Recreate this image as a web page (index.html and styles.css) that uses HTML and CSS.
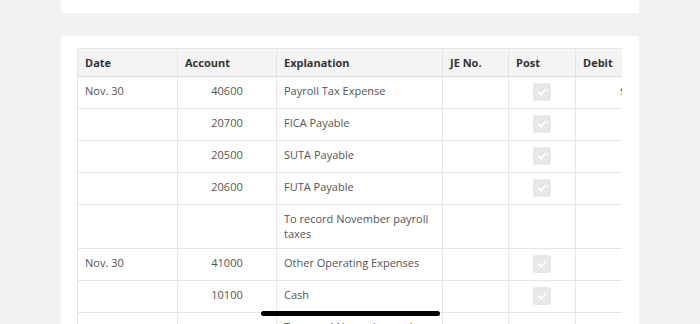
FILE: index.html
```html
<!DOCTYPE html>
<html>
<head>
<meta charset="utf-8">
<link rel="stylesheet" href="styles.css">
</head>
<body>
<div class="page">
  <div class="card card-top"></div>
  <div class="card card-main">
    <div class="table-wrap">
      <table class="journal">
        <colgroup>
          <col class="c-date"><col class="c-acct"><col class="c-expl"><col class="c-je"><col class="c-post"><col class="c-debit">
        </colgroup>
        <thead>
          <tr><th>Date</th><th>Account</th><th>Explanation</th><th>JE No.</th><th>Post</th><th>Debit</th></tr>
        </thead>
        <tbody>
          <tr><td>Nov. 30</td><td class="num">40600</td><td>Payroll Tax Expense</td><td></td><td class="post"><span class="chk"><svg viewBox="0 0 18 18" width="18" height="18"><path d="M5.5 9.2l2.4 2.4 4.6-4.8" fill="none" stroke="#fff" stroke-width="1.6" stroke-linecap="round" stroke-linejoin="round"/></svg></span></td><td><span class="dollar">$</span></td></tr>
          <tr><td></td><td class="num">20700</td><td>FICA Payable</td><td></td><td class="post"><span class="chk"><svg viewBox="0 0 18 18" width="18" height="18"><path d="M5.5 9.2l2.4 2.4 4.6-4.8" fill="none" stroke="#fff" stroke-width="1.6" stroke-linecap="round" stroke-linejoin="round"/></svg></span></td><td></td></tr>
          <tr><td></td><td class="num">20500</td><td>SUTA Payable</td><td></td><td class="post"><span class="chk"><svg viewBox="0 0 18 18" width="18" height="18"><path d="M5.5 9.2l2.4 2.4 4.6-4.8" fill="none" stroke="#fff" stroke-width="1.6" stroke-linecap="round" stroke-linejoin="round"/></svg></span></td><td></td></tr>
          <tr><td></td><td class="num">20600</td><td>FUTA Payable</td><td></td><td class="post"><span class="chk"><svg viewBox="0 0 18 18" width="18" height="18"><path d="M5.5 9.2l2.4 2.4 4.6-4.8" fill="none" stroke="#fff" stroke-width="1.6" stroke-linecap="round" stroke-linejoin="round"/></svg></span></td><td></td></tr>
          <tr><td></td><td class="num"></td><td>To record November payroll taxes</td><td></td><td></td><td></td></tr>
          <tr><td>Nov. 30</td><td class="num">41000</td><td>Other Operating Expenses</td><td></td><td class="post"><span class="chk"><svg viewBox="0 0 18 18" width="18" height="18"><path d="M5.5 9.2l2.4 2.4 4.6-4.8" fill="none" stroke="#fff" stroke-width="1.6" stroke-linecap="round" stroke-linejoin="round"/></svg></span></td><td></td></tr>
          <tr><td></td><td class="num">10100</td><td>Cash</td><td></td><td class="post"><span class="chk"><svg viewBox="0 0 18 18" width="18" height="18"><path d="M5.5 9.2l2.4 2.4 4.6-4.8" fill="none" stroke="#fff" stroke-width="1.6" stroke-linecap="round" stroke-linejoin="round"/></svg></span></td><td></td></tr>
          <tr><td></td><td class="num"></td><td>To record November cash payment</td><td></td><td></td><td></td></tr>
        </tbody>
      </table>
    </div>
  </div>
</div>
<div class="home-indicator"></div>
</body>
</html>
```
FILE: styles.css
```css
html, body {
  margin: 0;
  padding: 0;
  background: #f2f2f2;
  height: 324px;
  overflow: hidden;
  font-family: "Open Sans", "Noto Sans", sans-serif;
}
.page {
  width: 578px;
  margin: 0 auto;
}
.card {
  background: #fff;
}
.card-top {
  height: 13px;
  margin-bottom: 23px;
}
.card-main {
  padding: 12px 16px 40px;
}
.table-wrap {
  width: 545px;
  overflow: hidden;
}
.journal {
  border-collapse: collapse;
  table-layout: fixed;
  width: 620px;
  font-size: 11px;
  line-height: 15px;
  color: #555;
}
.c-date { width: 100px; }
.c-acct { width: 99px; }
.c-expl { width: 166px; }
.c-je { width: 66px; }
.c-post { width: 67px; }
.c-debit { width: 122px; }
.journal th {
  background: #f4f4f4;
  color: #333;
  font-weight: 700;
  text-align: left;
  padding: 6px 7px;
  border: 1px solid #e6e6e6;
  border-bottom: 1px solid #dcdcdc;
}
.journal td {
  padding: 6px 7px 7px;
  border: 1px solid #e6e6e6;
  vertical-align: top;
}
.journal td.num {
  text-align: center;
}
.journal td.post {
  text-align: center;
}
.chk {
  display: inline-block;
  width: 18px;
  height: 18px;
  background: #e8e8e8;
  border-radius: 2px;
  vertical-align: top;
}
.chk svg {
  display: block;
}
.dollar {
  display: inline-block;
  margin-left: 37px;
  color: #444;
}
.home-indicator {
  position: fixed;
  left: 261px;
  top: 311px;
  width: 179px;
  height: 5px;
  border-radius: 3px;
  background: #000;
}
```
